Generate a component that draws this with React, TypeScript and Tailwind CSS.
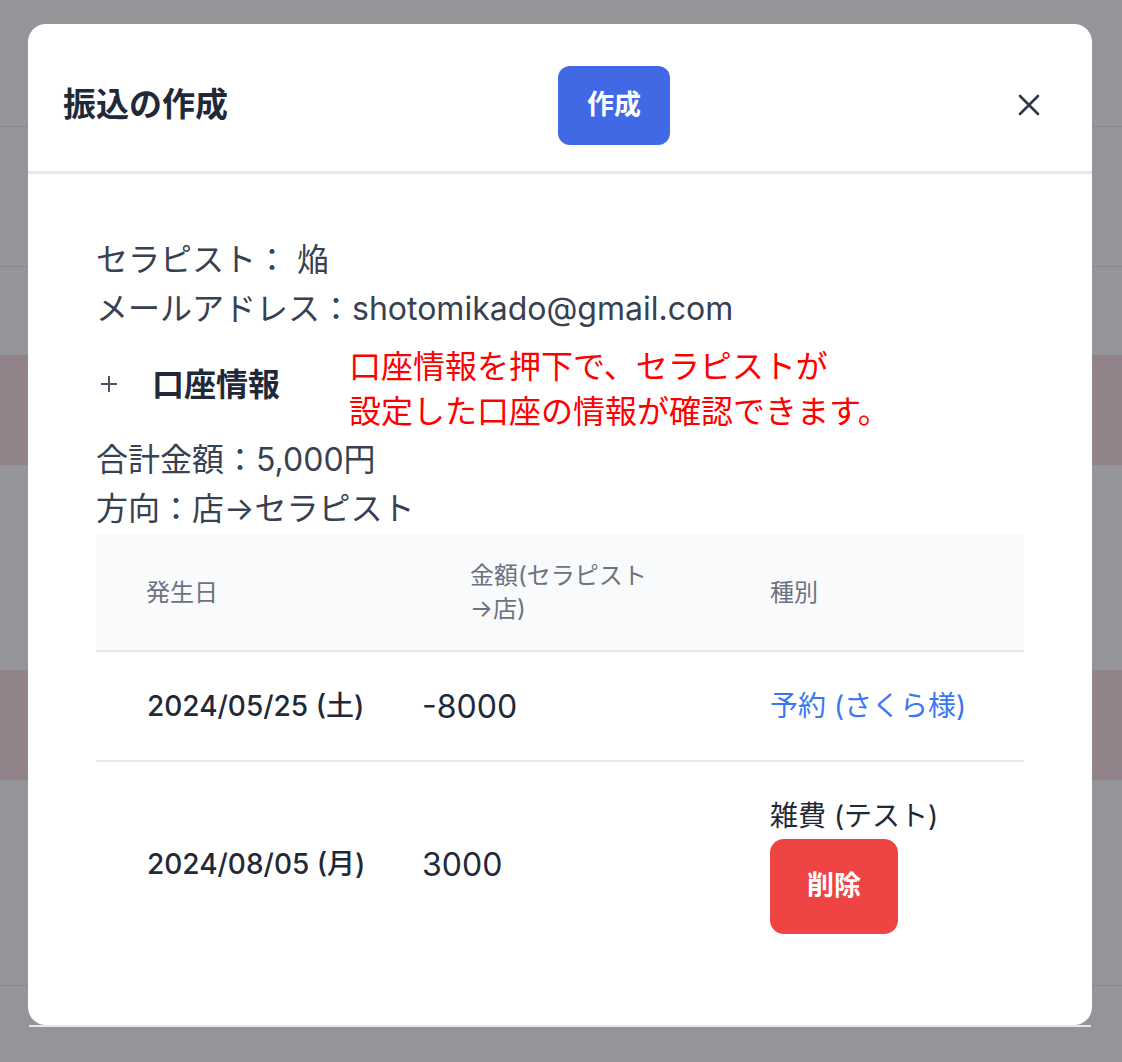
import React from "react";

const rows = [
  { date: "2024/05/25 (土)", amount: "-8000", kind: "予約 (さくら様)", link: true },
  { date: "2024/08/05 (月)", amount: "3000", kind: "雑費 (テスト)", link: false },
];

function CloseIcon() {
  return (
    <svg width="22" height="22" viewBox="0 0 22 22" fill="none" stroke="#2d3748" strokeWidth="2.6" strokeLinecap="round">
      <path d="M2 2L20 20M20 2L2 20" />
    </svg>
  );
}

function PlusIcon() {
  return (
    <svg width="18" height="18" viewBox="0 0 18 18" fill="none" stroke="#4b5563" strokeWidth="2">
      <path d="M9 1V17M1 9H17" />
    </svg>
  );
}

export default function App() {
  return (
    <div className="relative h-[1062px] w-[1122px] overflow-hidden bg-[#939599] font-['Inter','Noto_Sans_CJK_JP',sans-serif]">
      {/* page behind the overlay */}
      <div className="flex flex-col">
        <div className="h-[127px] border-b border-[#86888c]" />
        <div className="h-[140px] border-b border-[#86888c]" />
        <div className="h-[88px]" />
        <div className="h-[110px] bg-[#918389]" />
        <div className="h-[205px]" />
        <div className="h-[110px] bg-[#918389]" />
        <div className="h-[206px] border-b border-[#86888c]" />
      </div>

      {/* modal */}
      <div className="absolute left-[28px] top-[24px] w-[1064px]">
        <div className="flex h-[1001px] flex-col overflow-hidden rounded-[18px] bg-white">
          <div className="flex h-[150px] shrink-0 items-center border-b-[3px] border-[#e6e6ee] pl-[35px] pr-[52px] pt-[15px]">
            <h2 className="w-[495px] text-[33px] font-bold text-[#1f2937]">振込の作成</h2>
            <button className="flex h-[79px] w-[112px] items-center justify-center rounded-[12px] bg-[#4169e6] text-[27px] font-bold text-white">
              作成
            </button>
            <button className="ml-auto">
              <CloseIcon />
            </button>
          </div>

          <div className="relative px-[68px] pt-[61px] text-[32px] leading-[49px] text-[#374151]">
            <p>セラピスト： 焔</p>
            <p>メールアドレス：shotomikado@gmail.com</p>
            <div className="flex h-[102px] items-center">
              <span className="ml-[4px]">
                <PlusIcon />
              </span>
              <span className="ml-[34px] font-bold text-[#1f2937]">口座情報</span>
            </div>
            <p>合計金額：5,000円</p>
            <p>方向：店→セラピスト</p>

            <p className="absolute left-[321px] top-[170px] text-[32px] leading-[45px] text-[#ff0000]">
              口座情報を押下で、セラピストが
              <br />
              設定した口座の情報が確認できます。
            </p>

            <table className="mt-[1px] w-full border-collapse">
              <thead>
                <tr className="h-[117px] border-b-2 border-[#e5e7eb] bg-[#f9fafb] text-left text-[24px] leading-[33px] text-[#6b7280]">
                  <th className="w-[326px] pl-[50px] font-normal">発生日</th>
                  <th className="w-[300px] pl-[48px] pr-[48px] font-normal">
                    金額(セラピスト
                    <br />
                    →店)
                  </th>
                  <th className="pl-[48px] font-normal">種別</th>
                </tr>
              </thead>
              <tbody>
                {rows.map((r) => (
                  <tr key={r.date} className={r.link ? "border-b-2 border-[#e5e7eb]" : ""}>
                    <td className={`pl-[51px] text-[28px] font-medium text-[#1f2937] ${r.link ? "h-[110px]" : "h-[206px]"}`}>
                      {r.date}
                    </td>
                    <td className="text-[32px] text-[#1f2937]">{r.amount}</td>
                    <td className="pl-[48px] text-[28px] leading-[40px]">
                      {r.link ? (
                        <span className="text-[#3b78f0]">{r.kind}</span>
                      ) : (
                        <div className="flex flex-col items-start gap-[3px]">
                          <span className="text-[#1f2937]">{r.kind}</span>
                          <button className="h-[95px] w-[128px] rounded-[14px] bg-[#ef4444] text-[27px] font-bold text-white">
                            削除
                          </button>
                        </div>
                      )}
                    </td>
                  </tr>
                ))}
              </tbody>
            </table>
          </div>
        </div>
        <div className="mx-[1px] h-[2px] bg-[#e5e7eb]" />
      </div>
    </div>
  );
}
